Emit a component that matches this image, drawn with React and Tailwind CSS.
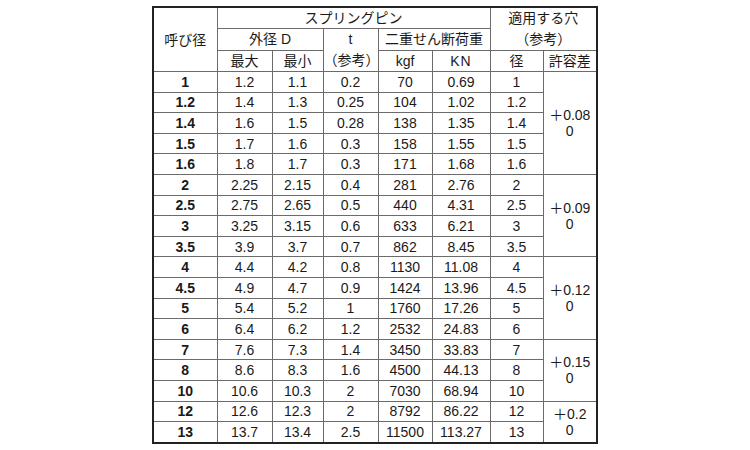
import React from "react";

const rows = [
    ["1", "1.2", "1.1", "0.2", "70", "0.69", "1"],
    ["1.2", "1.4", "1.3", "0.25", "104", "1.02", "1.2"],
    ["1.4", "1.6", "1.5", "0.28", "138", "1.35", "1.4"],
    ["1.5", "1.7", "1.6", "0.3", "158", "1.55", "1.5"],
    ["1.6", "1.8", "1.7", "0.3", "171", "1.68", "1.6"],
    ["2", "2.25", "2.15", "0.4", "281", "2.76", "2"],
    ["2.5", "2.75", "2.65", "0.5", "440", "4.31", "2.5"],
    ["3", "3.25", "3.15", "0.6", "633", "6.21", "3"],
    ["3.5", "3.9", "3.7", "0.7", "862", "8.45", "3.5"],
    ["4", "4.4", "4.2", "0.8", "1130", "11.08", "4"],
    ["4.5", "4.9", "4.7", "0.9", "1424", "13.96", "4.5"],
    ["5", "5.4", "5.2", "1", "1760", "17.26", "5"],
    ["6", "6.4", "6.2", "1.2", "2532", "24.83", "6"],
    ["7", "7.6", "7.3", "1.4", "3450", "33.83", "7"],
    ["8", "8.6", "8.3", "1.6", "4500", "44.13", "8"],
    ["10", "10.6", "10.3", "2", "7030", "68.94", "10"],
    ["12", "12.6", "12.3", "2", "8792", "86.22", "12"],
    ["13", "13.7", "13.4", "2.5", "11500", "113.27", "13"],
];

// 許容差 groups: start row index -> [rowSpan, value]
const tolerances = {
    0: [5, "0.08"],
    5: [4, "0.09"],
    9: [4, "0.12"],
    13: [3, "0.15"],
    16: [2, "0.2"],
};

const cell = "border border-[#6b6b6b] text-center p-0 align-middle";

export default function App() {
    return (
        <div className="w-[750px] h-[450px] bg-white pt-[6px] pl-[152px] text-[#1a1a1a]" style={{ fontFamily: '"Liberation Sans", "Noto Sans CJK JP", sans-serif' }}>
            <div className="w-[446px] border-2 border-[#222]">
                <table className="w-[442px] table-fixed border-collapse border-hidden text-[14px] leading-none">
                    <colgroup>
                        <col className="w-[63px]" />
                        <col className="w-[55px]" />
                        <col className="w-[51px]" />
                        <col className="w-[55px]" />
                        <col className="w-[54px]" />
                        <col className="w-[58px]" />
                        <col className="w-[53px]" />
                        <col className="w-[53px]" />
                    </colgroup>
                    <thead className="text-[14px]">
                        <tr className="h-[20px]">
                            <th rowSpan={3} className={`${cell} font-normal`}>呼び径</th>
                            <th colSpan={5} className={`${cell} font-normal`}>スプリングピン</th>
                            <th colSpan={2} rowSpan={2} className={`${cell} font-normal leading-[21px]`}>
                                <div>適用する穴</div>
                                <div>（参考）</div>
                            </th>
                        </tr>
                        <tr className="h-[21px]">
                            <th colSpan={2} className={`${cell} font-normal`}>外径 D</th>
                            <th rowSpan={2} className={`${cell} font-normal leading-[21px]`}>
                                <div>t</div>
                                <div>（参考）</div>
                            </th>
                            <th colSpan={2} className={`${cell} font-normal`}>二重せん断荷重</th>
                        </tr>
                        <tr className="h-[21px]">
                            <th className={`${cell} font-normal`}>最大</th>
                            <th className={`${cell} font-normal`}>最小</th>
                            <th className={`${cell} font-normal`}>kgf</th>
                            <th className={`${cell} font-normal tracking-[1px]`}>KN</th>
                            <th className={`${cell} font-normal`}>径</th>
                            <th className={`${cell} font-normal`}>許容差</th>
                        </tr>
                    </thead>
                    <tbody>
                        {rows.map((r, i) => (
                            <tr key={r[0]} className="h-[20.6px]">
                                <td className={`${cell} font-bold`}>{r[0]}</td>
                                {r.slice(1).map((v, j) => (
                                    <td key={j} className={cell}>{v}</td>
                                ))}
                                {tolerances[i] && (
                                    <td rowSpan={tolerances[i][0]} className={`${cell} leading-[16px]`}>
                                        <div>＋{tolerances[i][1]}</div>
                                        <div>0</div>
                                    </td>
                                )}
                            </tr>
                        ))}
                    </tbody>
                </table>
            </div>
        </div>
    );
}
